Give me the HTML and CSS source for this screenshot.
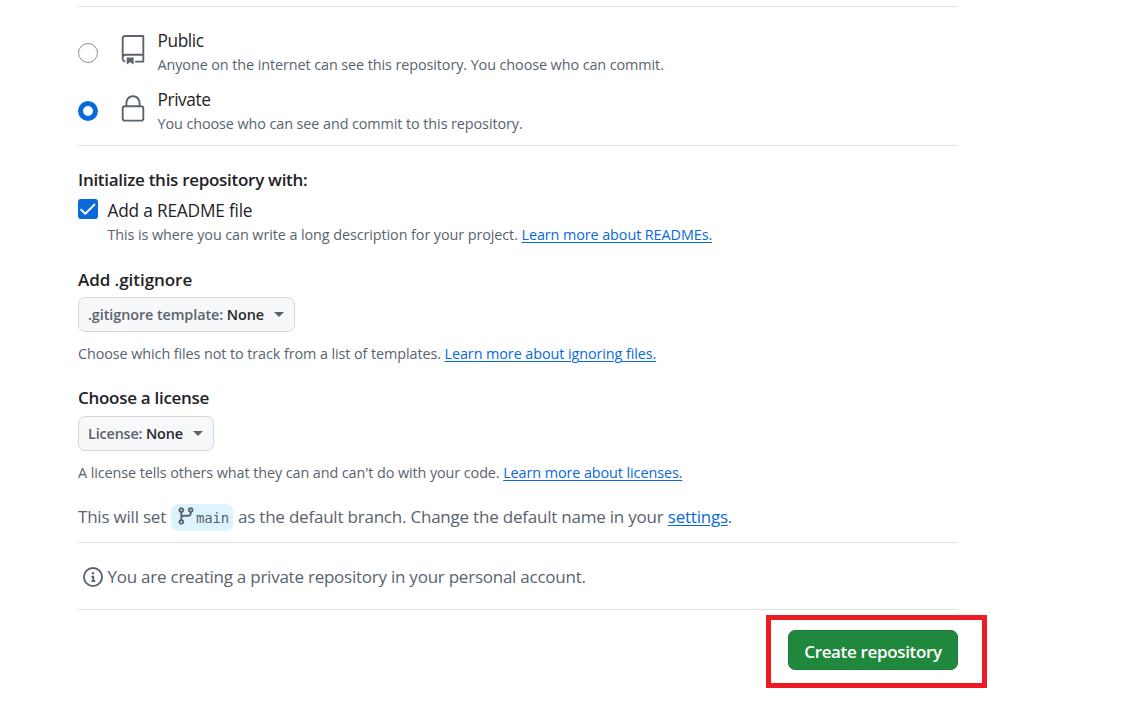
FILE: index.html
```html
<!DOCTYPE html>
<html lang="en">
<head>
<meta charset="utf-8">
<title>Create a new repository</title>
<link rel="stylesheet" href="styles.css">
</head>
<body>
<main class="form">
  <section class="visibility">
    <label class="option">
      <span class="radio"></span>
      <svg class="option-icon" viewBox="0 0 24 24"><path d="M3 2.75A2.75 2.75 0 0 1 5.75 0h14.5a.75.75 0 0 1 .75.75v20.5a.75.75 0 0 1-.75.75h-6a.75.75 0 0 1 0-1.5h5.25v-4H6A1.5 1.5 0 0 0 4.5 18v.75c0 .716.43 1.334 1.05 1.605a.75.75 0 0 1-.6 1.374A3.251 3.251 0 0 1 3 18.75ZM19.5 1.5H5.75c-.69 0-1.25.56-1.25 1.25v12.651A2.989 2.989 0 0 1 6 15h13.5Z"/><path d="M7 18.25a.25.25 0 0 1 .25-.25h5a.25.25 0 0 1 .25.25v5.01a.25.25 0 0 1-.397.201l-2.206-1.604a.25.25 0 0 0-.294 0L7.397 23.46a.25.25 0 0 1-.397-.2v-5.01Z"/></svg>
      <span class="option-text"><span class="title">Public</span><span class="note">Anyone on the internet can see this repository. You choose who can commit.</span></span>
    </label>
    <label class="option">
      <span class="radio radio-on"></span>
      <svg class="option-icon" viewBox="0 0 24 24"><path d="M6 9V7.25C6 3.845 8.503 1 12 1s6 2.845 6 6.25V9h.5a2.5 2.5 0 0 1 2.5 2.5v8a2.5 2.5 0 0 1-2.5 2.5h-13A2.5 2.5 0 0 1 3 19.5v-8A2.5 2.5 0 0 1 5.5 9Zm-1.5 2.5v8a1 1 0 0 0 1 1h13a1 1 0 0 0 1-1v-8a1 1 0 0 0-1-1h-13a1 1 0 0 0-1 1Zm3-4.25V9h9V7.25c0-2.67-1.922-4.75-4.5-4.75-2.578 0-4.5 2.08-4.5 4.75Z"/></svg>
      <span class="option-text"><span class="title">Private</span><span class="note">You choose who can see and commit to this repository.</span></span>
    </label>
  </section>

  <section class="readme">
    <h2 class="heading">Initialize this repository with:</h2>
    <label class="check-row">
      <span class="checkbox"><svg class="check" viewBox="0 0 20 20"><path d="M3.2 10.7 7.3 14.7 16.4 5.6"/></svg></span>
      <span class="check-text"><span class="title title-readme">Add a README file</span><span class="note">This is where you can write a long description for your project. <a class="link" href="#">Learn more about READMEs.</a></span></span>
    </label>
  </section>

  <section class="picker">
    <h2 class="heading heading-ignore">Add .gitignore</h2>
    <button class="select select-ignore"><span class="select-text">.gitignore template: <b class="value">None</b></span><span class="caret"></span></button>
    <p class="note">Choose which files not to track from a list of templates. <a class="link" href="#">Learn more about ignoring files.</a></p>
  </section>

  <section class="picker picker-license">
    <h2 class="heading">Choose a license</h2>
    <button class="select select-license"><span class="select-text">License: <b class="value">None</b></span><span class="caret"></span></button>
    <p class="note">A license tells others what they can and can't do with your code. <a class="link" href="#">Learn more about licenses.</a></p>
  </section>

  <div class="branch-line">
    <span class="body">This will set</span>
    <span class="branch"><svg class="icon" viewBox="0 0 16 16"><path d="M9.5 3.25a2.25 2.25 0 1 1 3 2.122V6A2.5 2.5 0 0 1 10 8.5H6a1 1 0 0 0-1 1v1.128a2.251 2.251 0 1 1-1.5 0V5.372a2.25 2.25 0 1 1 1.5 0v1.836A2.493 2.493 0 0 1 6 7h4a1 1 0 0 0 1-1v-.628A2.25 2.25 0 0 1 9.5 3.25Zm-6 0a.75.75 0 1 0 1.5 0 .75.75 0 0 0-1.5 0Zm8.25-.75a.75.75 0 1 0 0 1.5.75.75 0 0 0 0-1.5ZM4.25 12a.75.75 0 1 0 0 1.5.75.75 0 0 0 0-1.5Z"/></svg><span class="branch-name">main</span></span>
    <span class="body">as the default branch. Change the default name in your <a class="link" href="#">settings</a>.</span>
  </div>

  <div class="account-line">
    <svg class="icon" viewBox="0 0 16 16"><path d="M0 8a8 8 0 1 1 16 0A8 8 0 0 1 0 8Zm8-6.5a6.5 6.5 0 1 0 0 13 6.5 6.5 0 0 0 0-13ZM6.5 7.75A.75.75 0 0 1 7.25 7h1a.75.75 0 0 1 .75.75v2.75h.25a.75.75 0 0 1 0 1.5h-2a.75.75 0 0 1 0-1.5h.25v-2h-.25a.75.75 0 0 1-.75-.75ZM8 6a1 1 0 1 1 0-2 1 1 0 0 1 0 2Z"/></svg>
    <span class="body body-account">You are creating a private repository in your personal account.</span>
  </div>

  <div class="actions">
    <div class="highlight"><button class="submit">Create repository</button></div>
  </div>
</main>
</body>
</html>
```
FILE: styles.css
```css
* { box-sizing: border-box; }
body {
  margin: 0;
  background: #fff;
  color: #1f2328;
  font-family: "Open Sans", "Noto Sans", sans-serif;
  overflow: hidden;
}
.form { width: 880px; margin: 6px 0 0 78px; }
svg { display: block; fill: #59636e; flex: none; }
button { font-family: inherit; margin: 0; }

.title, .note, .body, .heading, .select-text { white-space: nowrap; }
.title { display: block; font-size: 17.3px; line-height: 24px; letter-spacing: -0.4px; }
.title-readme { letter-spacing: -0.2px; }
.note { display: block; margin: 0; font-size: 14.4px; line-height: 24px; color: #59636e; letter-spacing: -0.09px; }
.body { font-size: 17px; color: #59636e; letter-spacing: -0.215px; }
.body-account { letter-spacing: -0.24px; }
.heading { margin: 0; font-size: 17px; line-height: 24px; font-weight: 600; letter-spacing: -0.29px; }
.heading-ignore { letter-spacing: -0.05px; }
.link { color: #0969da; text-decoration: underline; text-underline-offset: 2px; text-decoration-thickness: 1px; }

.visibility {
  height: 140px;
  border-top: 1px solid #dde2e7;
  border-bottom: 1px solid #dde2e7;
  padding-top: 22px;
}
.option { display: flex; height: 59px; }
.radio {
  width: 20px; height: 20px; margin-top: 14px;
  border: 1px solid #868f99; border-radius: 50%;
}
.radio-on { border: 5px solid #0969da; margin-top: 13px; }
.option-icon { width: 30px; height: 30px; margin: 6px 9.5px 0 20px; }

.readme { padding-top: 22px; height: 122px; }
.check-row { display: flex; gap: 9.5px; margin-top: 7px; }
.checkbox { width: 20px; height: 20px; border-radius: 3px; background: #0969da; }
.check { width: 20px; height: 20px; fill: none; stroke: #fff; stroke-width: 2; stroke-linecap: round; stroke-linejoin: round; }

.picker { height: 118px; }
.select {
  display: flex; align-items: center; justify-content: space-between;
  height: 35px; margin-top: 5px; padding: 0 10px 0 9px;
  border: 1px solid #d1d9e0; border-radius: 7px;
  background: #f6f8fa; color: #59636e;
  font-size: 14.4px; font-weight: 600; letter-spacing: -0.08px;
}
.select-ignore { width: 217px; }
.select-license { width: 136px; margin-top: 6px; letter-spacing: -0.16px; }
.value { color: #25292e; font-weight: 600; }
.caret { border: 5px solid transparent; border-top-color: #59636e; border-bottom: 0; }
.picker .note { margin-top: 10px; }
.picker-license { height: 113px; }

.branch-line { display: flex; align-items: center; height: 36px; margin-bottom: 7px; }
.branch-line .body { transform: translateY(-1px); }
.branch {
  display: flex; align-items: center;
  width: 62px; height: 27px; margin: 0 5px; padding-left: 5px;
  border-radius: 7px; background: #ddf4ff;
}
.branch .icon { margin-top: -2px; }
.icon { width: 20px; height: 20px; }
.branch-name { font: 14px "DejaVu Sans Mono", monospace; color: #59636e; letter-spacing: -0.2px; padding-top: 1px; }
.account-line {
  display: flex; align-items: center; gap: 4.5px;
  height: 68px; padding-left: 5px;
  border-top: 1px solid #dde2e7; border-bottom: 1px solid #dde2e7;
}
.account-line .icon { margin-top: 1px; }
.actions { display: flex; justify-content: flex-end; padding-top: 5px; margin-right: -29px; }
.highlight { width: 221px; height: 73px; padding: 10px 0 0 17px; border: 5px solid #ed1c24; }
.submit {
  display: block; width: 170px; height: 40px; padding: 2px 0 0;
  border: 1px solid #1f7a37; border-radius: 7px;
  background: #1f883d; color: #fff;
  font-size: 17px; font-weight: 600; letter-spacing: -0.34px;
}
```
